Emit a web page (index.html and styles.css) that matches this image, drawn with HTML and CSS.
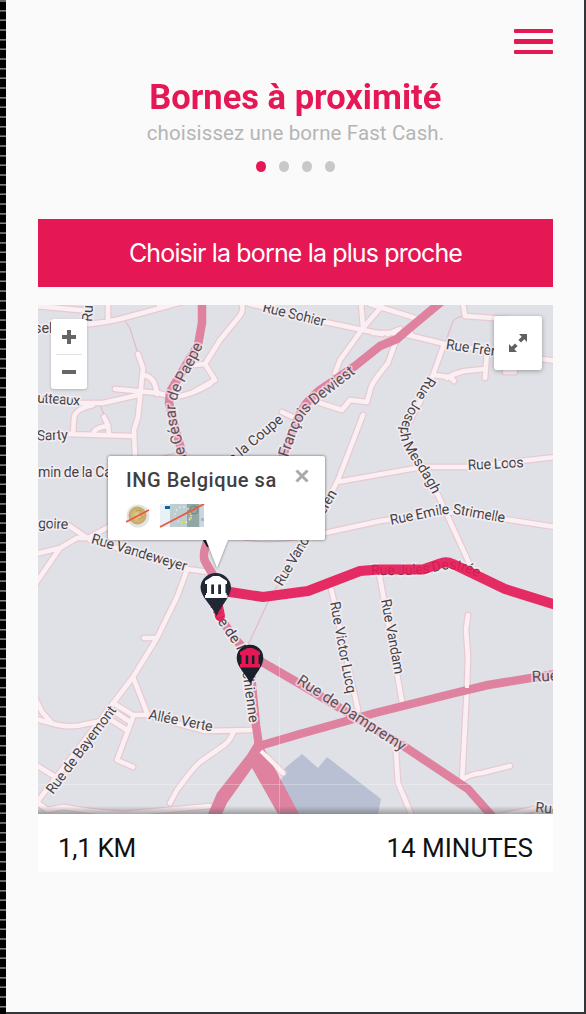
FILE: index.html
```
<!DOCTYPE html>
<html lang="fr">
<head>
<meta charset="utf-8">
<title>Bornes à proximité</title>
<link rel="stylesheet" href="styles.css">
</head>
<body>
<div class="frame">
<main class="screen">
  <nav class="topbar">
    <button class="menu" aria-label="Menu"><i></i><i></i><i></i></button>
  </nav>
  <header class="intro">
    <h1 class="title"><span>Bornes à proximité</span></h1>
    <p class="subtitle">choisissez une borne Fast Cash.</p>
    <div class="steps"><i class="active"></i><i></i><i></i><i></i></div>
  </header>
  <button class="cta">Choisir la borne la plus proche</button>
  <section class="card">
    <div class="map">
      <svg class="tiles" viewBox="38 305 515 509" width="515" height="509">
        <defs>
          <g id="streets">
            <path d="M36 306L90 311M60 326Q95 325 120 319L190 300M108 305V321M157 302L161 308"/>
            <path d="M138 354L143 368L140 397L138 417L134 430L135 457M143 375Q155 376 157 394M115 389L158 393L173 397Q190 396 210 384"/>
            <path d="M80 403H103L138 395M93 405Q75 409 74 418L73 434M67 434L133 436M104 417L108 425L109 434M93 434Q95 427 108 426"/>
            <path d="M242 305Q244 312 238 318L220 340L205 364L195 365M205 364L215 380L195 391M250 304L263 307M325 322L382 334"/>
            <path d="M335 373L340 360L363 328L382 306M361 303L363 327M317 402L342 410L350 400L367 402L371 387Q374 380 388 363L397 338"/>
            <path d="M363 415L338 480L325 505L310 530M337 482L422 467L468 467L555 457M325 533L380 521L442 512L465 513L555 527M282 412L297 419"/>
            <path d="M370 304L415 318M373 333H392L408 335L445 344L555 361M388 334L400 329M410 328L411 336M463 303L465 316L508 319M444 344L433 375M433 375L450 377L454 381M447 378Q455 373 465 371L485 369M487 352L485 378M505 372H515"/>
            <path d="M433 375L420 402L405 430L414 455L438 495L470 565M331 588L358 710M379 572L402 702M468 615L466 630L468 657L467 687L462 782M462 780Q470 774 482 773L510 766"/>
            <path d="M68 525L87 538M35 554L60 548L77 538H88L112 525M60 548L36 583M90 540L187 569L208 572M187 570L177 597L157 638L133 677L108 710L37 802M144 638H157"/>
            <path d="M133 677L147 713M113 703L133 715H150M109 708L130 722M106 717L127 730M133 717L117 760L133 767M36 719L58 725Q73 728 86 724L108 720M36 700L42 712L51 722M36 765L57 778"/>
            <path d="M150 716L205 731L255 730M233 733Q230 742 220 748L200 762Q193 768 177 790L170 803M37 802L47 810L63 807L90 811L123 814L210 806M396 752L398 783L412 816M260 750L283 773M500 816L535 809"/>
          </g>
          <linearGradient id="fade" x2="0" y2="1"><stop stop-color="#555" stop-opacity="0"/><stop offset="1" stop-color="#555" stop-opacity=".48"/></linearGradient>
          <path id="paepe" d="M189 471L182 440C174 414 173 404 182 387L205 342"/>
          <path id="dewiest" d="M288 458C299 424 302 415 320 401L360 370"/>
          <path id="mesdagh" d="M428 376C413 402 395 424 402 442S426 476 436 502"/>
          <path id="strimelle" d="M391 525L430 517Q449 512 461 515L506 523"/>
          <path id="destree" d="M371 575C395 575 420 576 438 571S466 572 483 580"/>
          <path id="marchienne" d="M210 606L219 624L235 647C242 658 241 664 243 676L250 728"/>
        </defs>
        <rect x="38" y="305" width="515" height="509" fill="#dfe1e6"/>
        <path fill="#bac0d3" d="M285 768L302 754L318 768L327 757L381 799L378 814H298L280 785Z"/>
        <path class="alley" d="M125 321L130 328L138 354M100 405L105 417M463 316Q453 318 452 324L445 343M310 530L268 602L248 645M243 540Q285 546 325 533M160 457L182 451M38 473L108 468"/>
        <use href="#streets" class="street-edge"/>
        <use href="#streets" class="street"/>
        <g class="major">
          <path d="M202 303V323L198 345L170 392L169 403L177 435L190 480L208 540Q201 556 206 563L213 575L220 617L234 638L250 655"/>
          <path d="M441 302L405 332L397 339L380 346L355 366L320 390Q304 402 297 420L283 455"/>
          <path d="M250 655L300 684L405 747L468 789L492 816"/>
          <path d="M250 665L256 725L259 746L300 734L375 713L455 693L488 685L555 674"/>
        </g>
        <path fill="#df829f" d="M255 742L262 745L272 763L299 814H278L252 768L227 803L222 814H208L217 793L247 755Z"/>
        <path d="M467 684V688M401 697L402 701M356 704L358 709M261 751L283 773" stroke="#fbf0f3" stroke-width="4" fill="none"/>
        <path d="M279.500 655V814M38 784.500H553" stroke="#fff" stroke-opacity=".28"/>
        <g class="labels">
          <text transform="translate(34 332.500)">sel</text>
          <text transform="translate(92 322) rotate(-87)">Rue</text>
          <text transform="translate(37 402.500) rotate(4)" textLength="43">utteaux</text>
          <text transform="translate(37 440.500) rotate(-2)" textLength="31">Sarty</text>
          <text transform="translate(38 477) rotate(0)" textLength="74">min de la Ca</text>
          <text transform="translate(38 528) rotate(2)" textLength="30">goire</text>
          <text transform="translate(90.500 543) rotate(16.500)" textLength="99">Rue Vandeweyer</text>
          <text transform="translate(262 311.500) rotate(13.500)" textLength="64">Rue Sohier</text>
          <text transform="translate(445.500 349) rotate(8)" textLength="64">Rue Frères</text>
          <text transform="translate(468 470) rotate(-3)" textLength="56">Rue Loos</text>
          <text transform="translate(381 600) rotate(79.500)" textLength="76">Rue Vandam</text>
          <text transform="translate(330 602.500) rotate(79.500)" textLength="93">Rue Victor Lucq</text>
          <text transform="translate(282 587) rotate(-59.500)" textLength="109">Rue Vandermeeren</text>
          <text transform="translate(284 421) rotate(-40)" text-anchor="end">Rue de la Coupe</text>
          <text class="big" transform="translate(296 683) rotate(33)" textLength="126">Rue de Dampremy</text>
          <text transform="translate(148 719) rotate(11)" textLength="65">Allée Verte</text>
          <text transform="translate(53 795) rotate(-53)" textLength="106">Rue de Bayemont</text>
          <text class="big" transform="translate(532 682) rotate(-3)">Rue</text>
          <text transform="translate(535 812) rotate(5)">Rue</text>
          <text class="big"><textPath href="#paepe" textLength="133">Rue César de Paepe</textPath></text>
          <text class="big"><textPath href="#dewiest" textLength="112">François Dewiest</textPath></text>
          <text><textPath href="#mesdagh" textLength="134">Rue Joseph Mesdagh</textPath></text>
          <text><textPath href="#strimelle" textLength="115">Rue Emile Strimelle</textPath></text>
          <text><textPath href="#destree" textLength="109">Rue Jules Destrée</textPath></text>
          <text><textPath href="#marchienne" textLength="126">Rue de Marchienne</textPath></text>
        </g>
        <path class="route" d="M220 616L215 591L230 592L263 597L308 591L360 571L378 569.500H423L440 563.500Q446 561 453 564L505 589L556 605"/>
        <path d="M197 530H212V547H207Z" fill="#18202d"/>
        <path fill="#222736" d="M216.500 616C211 604 200.500 597 200.500 587A15.300 15.300 0 0 1 231 587C231 597 222 604 216.500 616Z"/>
        <path fill="#fff" d="M205 581L213 576H219L227 581V584H205ZM207 583H225.500V594H207ZM206 593H226.500V595H227.500V598H205V595H206Z"/>
        <path d="M212.600 584.500V594M219.600 584.500V594" stroke="#222736" stroke-width="2.800"/>
        <path fill="#18202b" d="M250.500 684C246 674 236.700 667 236.700 658A13.300 13.300 0 0 1 263.300 658C263.300 667 255 674 250.500 684Z"/>
        <path fill="#e51754" d="M240 652L247.500 648H252.500L260 652V655H240ZM241.500 654H258.500V665H241.500ZM240 664H260V667.500H240Z"/>
        <path d="M247 655.500V664M253.200 655.500V664" stroke="#18202b" stroke-width="2.500"/>
        <rect x="38" y="806" width="515" height="8" fill="url(#fade)"/>
      </svg>
      <div class="zoomer">
        <button aria-label="Zoom avant"><svg width="14" height="14"><path d="M7 0V14M0 7H14"/></svg></button>
        <button aria-label="Zoom arrière"><svg width="14" height="14"><path d="M0 7H14"/></svg></button>
      </div>
      <button class="expand" aria-label="Agrandir">
        <svg width="18" height="18" viewBox="0 0 18 18"><path d="M10 0H18V8L15.300 5.300L12 8.600L9.400 6L12.700 2.700ZM0 10L2.700 12.700L6 9.400L8.600 12L5.300 15.300L8 18H0Z"/></svg>
      </button>
      <div class="popup">
        <div class="popup-head">
          <strong>ING Belgique sa</strong>
          <svg class="close" width="14" height="14"><path d="M1.500 1.500L12.500 12.500M12.500 1.500L1.500 12.500"/></svg>
        </div>
        <svg class="money" width="80" height="26" viewBox="0 0 80 26">
          <defs><radialGradient id="gold"><stop stop-color="#e4cf91"/><stop offset="1" stop-color="#c5a663"/></radialGradient></defs>
          <circle cx="12" cy="12" r="11.500" fill="#e2e3e3"/><circle cx="11.500" cy="11.500" r="9" fill="url(#gold)"/>
          <path d="M10 7L15 6 14 10 17 13 12 16" fill="none" stroke="#b99b59"/>
          <path d="M34 0H78V23H34Z" fill="#e8f2f5"/><path d="M44 0H74V23H44Z" fill="#bdced1"/><path d="M61 0H73V23H61Z" fill="#91a6a5"/><path d="M74 0H78V23H74Z" fill="#ccd6df"/>
          <path d="M39 2H44V5H39Z" fill="#17609e"/><path d="M75 14H78V17H75Z" fill="#9db7d5"/>
          <circle cx="57" cy="11" r="8" fill="none" stroke="#e3eef0" stroke-width="1.500" stroke-dasharray="1.500 2.700"/>
          <path d="M64 8L65 10M63 14H66M56 19H59" stroke="#dfd13f" stroke-width="2"/><circle cx="68" cy="6" r="4" fill="none" stroke="#718582"/>
          <path d="M0 18L23 6M34 23L78 0" stroke="#e85a43" stroke-width="1.900"/>
        </svg>
        <svg class="tail" width="26" height="31"><path d="M2 0H24L13 28Z"/></svg>
      </div>
    </div>
    <footer class="summary"><span class="distance">1,1 KM</span><span class="duration">14 MINUTES</span></footer>
  </section>
</main>
</div>
</body>
</html>
```
FILE: styles.css
```
* { box-sizing: border-box; }
body { margin: 0; font-family: Roboto, "Liberation Sans", sans-serif; }
button { border: 0; padding: 0; font: inherit; }
svg { display: block; }
.frame {
  height: 1014px; padding-left: 6px;
  background: repeating-linear-gradient(#444 0, #888 1px, #444 2px, #000 2px, #000 9.670px);
}
.screen {
  height: 1014px; padding: 29px 31px 0 32px; background: #fafafa;
  border-right: 2px solid #333537; border-bottom: 2px solid #333537;
  display: flex; flex-direction: column;
}
.topbar { display: flex; justify-content: flex-end; height: 26px; }
.menu { width: 39px; height: 26px; background: none; display: flex; flex-direction: column; gap: 6px; }
.menu i { display: block; width: 100%; height: 4.300px; background: #e51754; border-radius: 1px; }
.intro { height: 164px; display: flex; flex-direction: column; align-items: center; padding-top: 21px; }
.title { margin: 0; height: 43px; line-height: 43px; font-size: 35.500px; font-weight: 700; color: #e51754; white-space: nowrap; }
.title span { display: inline-block; transform: scaleX(.972); }
.subtitle { margin: 0; height: 28px; line-height: 28px; font-size: 20.500px; letter-spacing: .12px; color: #b5b5b5; white-space: nowrap; }
.steps { display: flex; gap: 13px; padding-top: 14px; }
.steps i { width: 10px; height: 11px; border-radius: 50%; background: #c8c8c8; }
.steps .active { background: #e51754; }
.cta { height: 68px; background: #e51754; color: #fff; font-family: Inter, sans-serif; font-size: 25px; font-weight: 400; letter-spacing: -.86px; white-space: nowrap; }
.card { margin-top: 18px; background: #fff; height: 567px; }
.map { position: relative; height: 509px; overflow: hidden; }
.street-edge, .street, .alley, .major, .route { fill: none; stroke-linecap: round; stroke-linejoin: round; }
.street-edge { stroke: #e8c9d2; stroke-width: 7px; }
.street { stroke: #faf0f3; stroke-width: 4.600px; }
.alley { stroke: #e5bac7; stroke-width: 1.200px; }
.major { stroke: #df829f; stroke-width: 8.500px; }
.route { stroke: #e51754; stroke-opacity: .9; stroke-width: 10px; }
.labels { font-size: 14.300px; fill: #424347; stroke: #f5eef2; stroke-opacity: .85; stroke-width: 3.500px; stroke-linejoin: round; paint-order: stroke; }
.big { font-size: 15.500px; fill: #59525a; stroke-opacity: .65; }
.zoomer { position: absolute; left: 13px; top: 14px; width: 36px; height: 70px; padding: 0 5px; border-radius: 3px; background: #fff; box-shadow: 0 1px 3px #0003; }
.zoomer button { display: grid; place-items: center; width: 26px; height: 35px; background: none; }
.zoomer button + button { border-top: 1px solid #e2e2e2; }
.zoomer path { stroke: #666; stroke-width: 4; }
.expand { position: absolute; left: 456px; top: 11px; width: 48px; height: 54px; display: grid; place-items: center; background: #fff; border-radius: 3px; box-shadow: 0 1px 5px #0005; }
.expand path { fill: #606060; }
.popup { position: absolute; left: 70px; top: 151px; width: 217px; height: 84px; padding: 10px 16px 0 18px; background: #fff; border-radius: 2px; box-shadow: 0 0 3px #0009; }
.popup-head { display: flex; justify-content: space-between; height: 38px; color: #404043; }
.popup strong { font-size: 20px; line-height: 28px; font-weight: 500; letter-spacing: .55px; white-space: nowrap; }
.close { margin-top: 3px; }
.close path { stroke: #aaa; stroke-width: 3; }
.tail { position: absolute; left: 96px; top: 84px; }
.tail path { fill: #fff; filter: drop-shadow(0 1px 1px #0006); }
.summary { display: flex; justify-content: space-between; align-items: center; height: 58px; padding: 9px 20px 0; font-size: 26px; color: #111; }
.distance { letter-spacing: -.3px; }
```
